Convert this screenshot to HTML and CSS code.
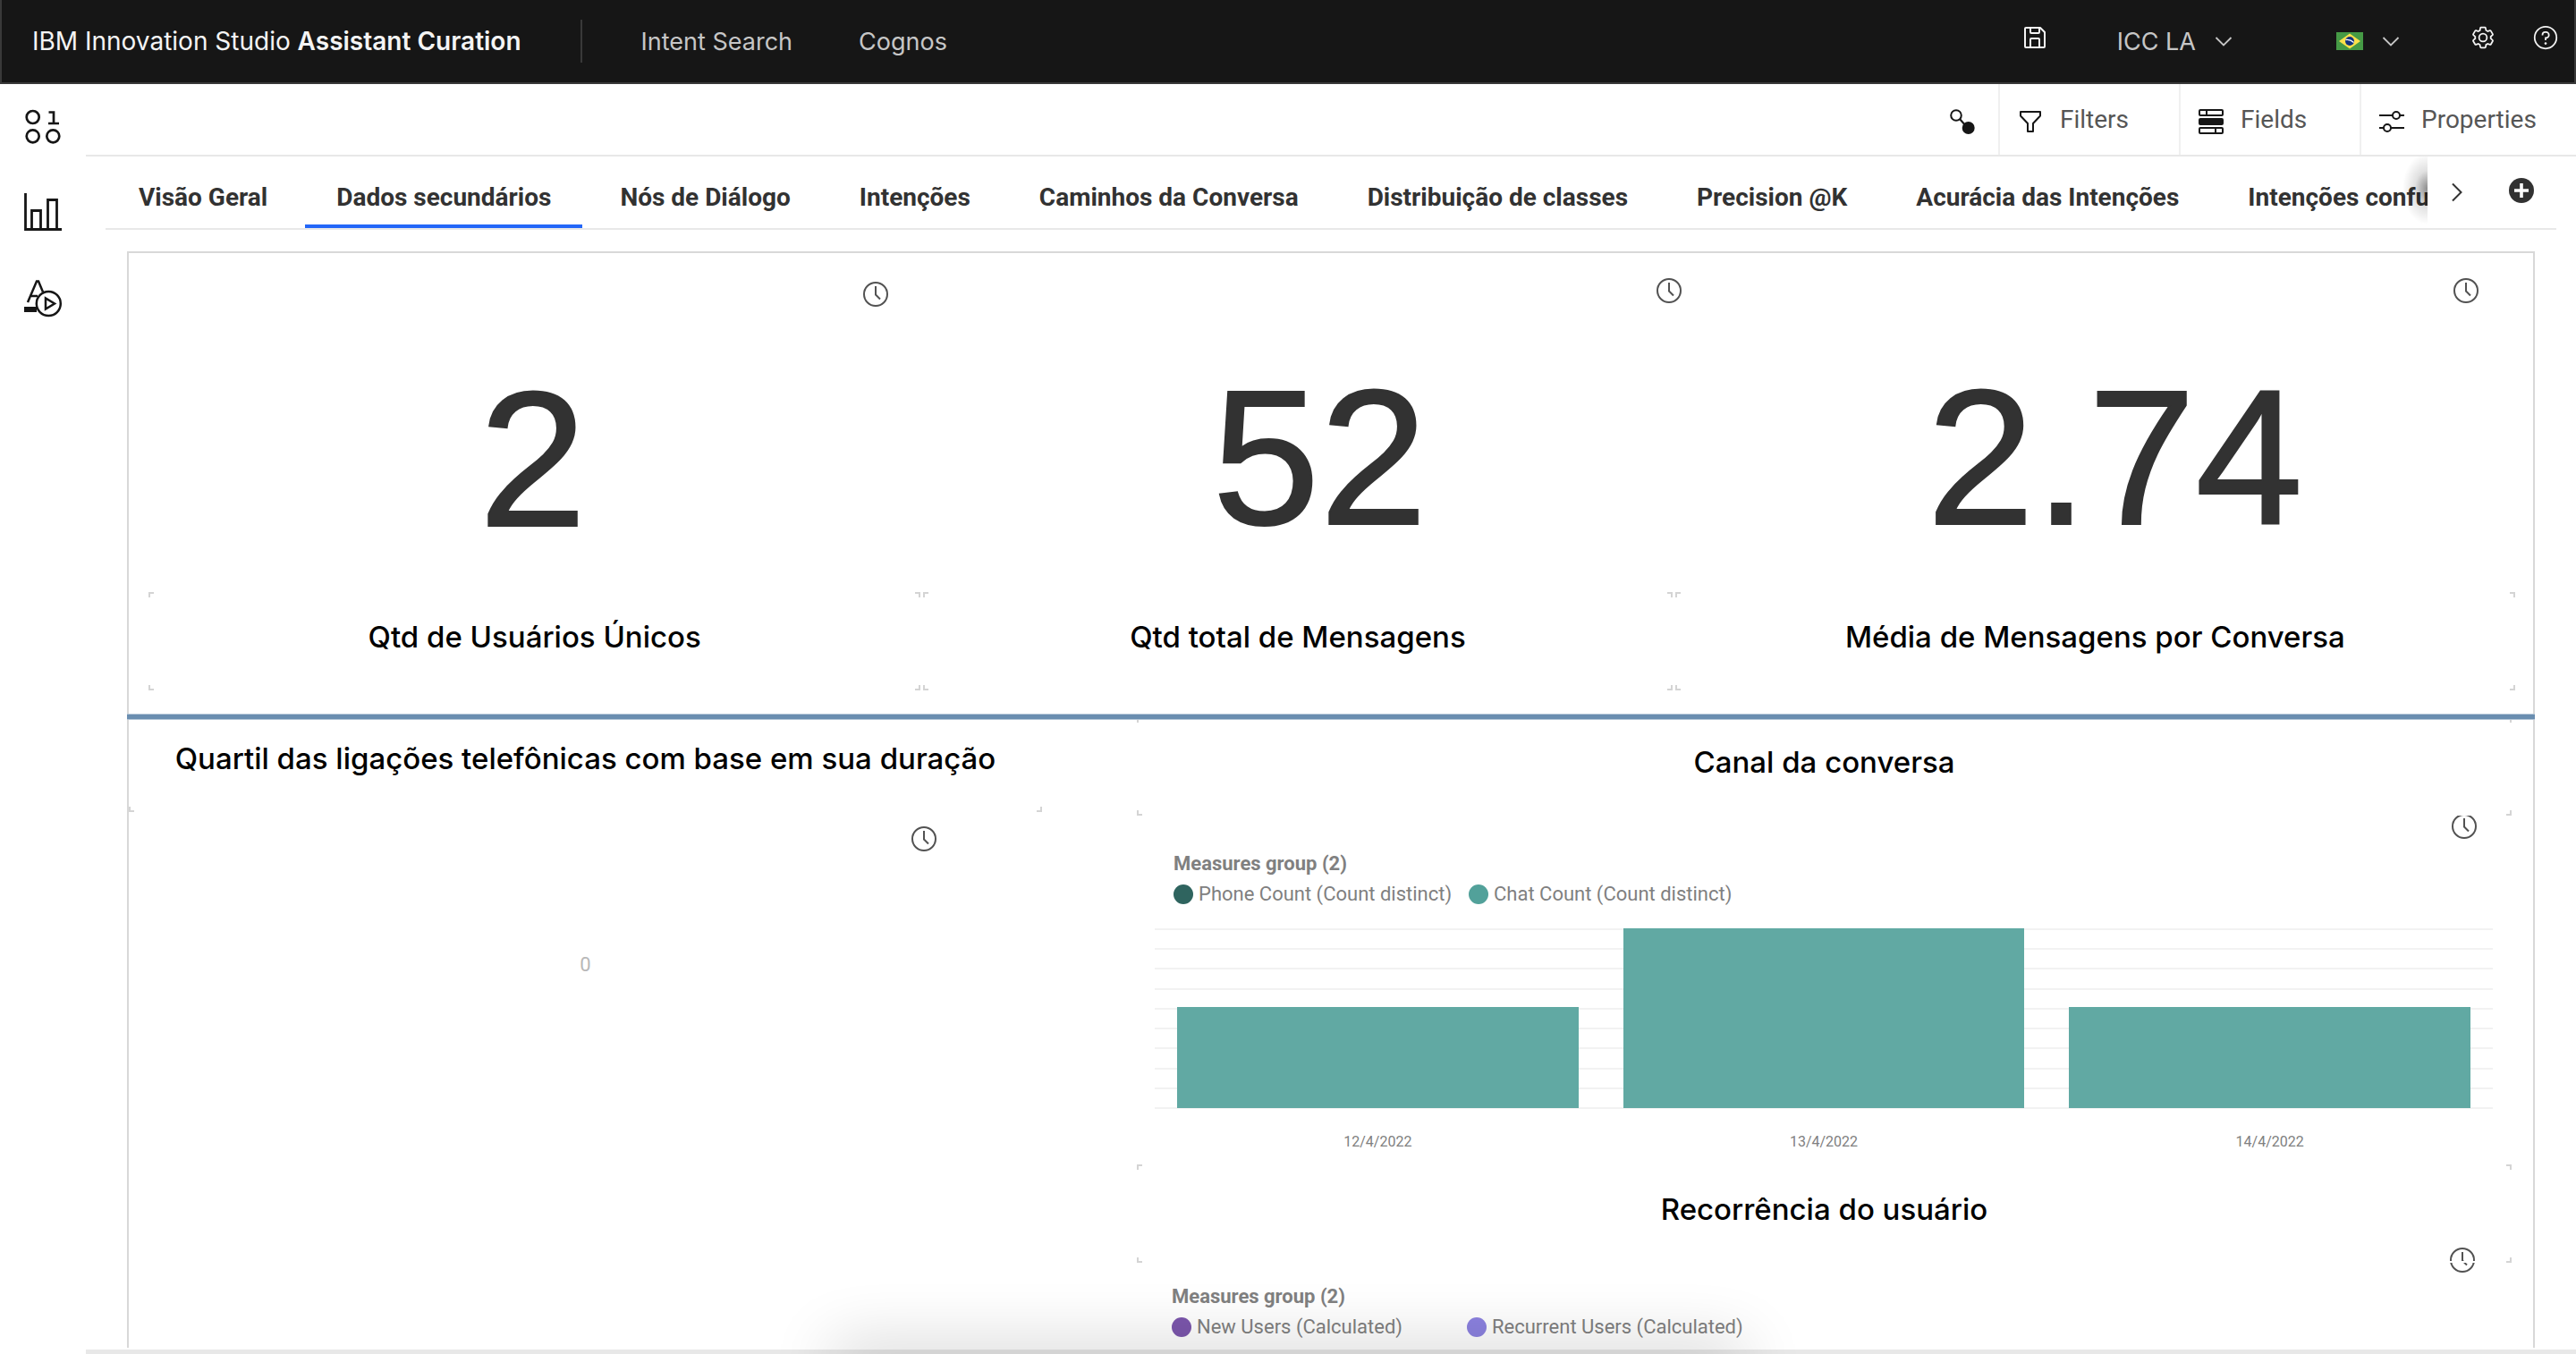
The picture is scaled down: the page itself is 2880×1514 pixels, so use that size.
FILE: index.html
```html
<!DOCTYPE html>
<html lang="pt-BR">
<head>
<meta charset="utf-8">
<meta name="viewport" content="width=device-width, initial-scale=1">
<title>IBM Innovation Studio Assistant Curation</title>
<link rel="stylesheet" href="styles.css">
</head>
<body>
<svg class="sprite" aria-hidden="true">
  <symbol id="clock" viewBox="0 0 28 28"><g fill="none" stroke="currentColor" stroke-width="2"><circle cx="14" cy="14" r="13"/><path d="M14 5v9.500l5 5"/></g></symbol>
  <symbol id="chevron-down" viewBox="0 0 22 22"><path d="M2.500 7 11 15.500 19.500 7" fill="none" stroke="currentColor" stroke-width="1.800"/></symbol>
</svg>
<div class="app">
  <header class="header">
    <a class="brand" href="#">IBM Innovation Studio <b>Assistant Curation</b></a>
    <nav class="header-nav" aria-label="Principal">
      <a href="#">Intent Search</a>
      <a href="#">Cognos</a>
    </nav>
    <div class="header-actions">
      <button class="icon-button" type="button" aria-label="Save">
        <svg width="32" height="32" viewBox="0 0 32 32" fill="currentColor"><path d="M27.710 9.290l-5-5A1 1 0 0 0 22 4H6A2 2 0 0 0 4 6V26a2 2 0 0 0 2 2H26a2 2 0 0 0 2-2V10A1 1 0 0 0 27.710 9.290ZM12 6h8v4H12Zm8 20H12V18h8Zm2 0V18a2 2 0 0 0-2-2H12a2 2 0 0 0-2 2v8H6V6h4v4a2 2 0 0 0 2 2h8a2 2 0 0 0 2-2V6.410l4 4V26Z"/></svg>
      </button>
      <button class="menu-button menu-team" type="button" aria-haspopup="true">ICC LA
        <svg width="22" height="22"><use href="#chevron-down"/></svg>
      </button>
      <button class="menu-button menu-language" type="button" aria-haspopup="true" aria-label="Idioma: Português (Brasil)">
        <svg width="30" height="20" viewBox="0 0 30 20"><path fill="#459a45" d="M0 0h30v20H0z"/><path fill="#fbe04a" d="M15 1.500 27 10 15 18.500 3 10z"/><circle cx="15" cy="10" r="5" fill="#13317f"/><path d="M10.500 8.500q5-.8 9 3" fill="none" stroke="#fff" stroke-width="1.300"/></svg>
        <svg width="22" height="22"><use href="#chevron-down"/></svg>
      </button>
      <button class="icon-button" type="button" aria-label="Settings">
        <svg width="28" height="28" viewBox="0 0 32 32" fill="currentColor"><path d="M27 16.760c0-.25 0-.5 0-.76s0-.51 0-.77l1.920-1.680A2 2 0 0 0 29.300 11L26.940 7a2 2 0 0 0-1.730-1 2 2 0 0 0-.64.1l-2.430.82a11.350 11.350 0 0 0-1.310-.75l-.51-2.520a2 2 0 0 0-2-1.610H13.640a2 2 0 0 0-2 1.610l-.51 2.520a11.480 11.480 0 0 0-1.320.75L7.430 6.060A2 2 0 0 0 6.790 6 2 2 0 0 0 5.060 7L2.700 11a2 2 0 0 0 .41 2.510L5 15.240c0 .25 0 .5 0 .76s0 .51 0 .77L3.110 18.450A2 2 0 0 0 2.700 21L5.060 25a2 2 0 0 0 1.730 1 2 2 0 0 0 .64-.1l2.430-.82a11.350 11.350 0 0 0 1.310.75l.51 2.520a2 2 0 0 0 2 1.610h4.720a2 2 0 0 0 2-1.610l.51-2.520a11.480 11.480 0 0 0 1.320-.75l2.420.82a2 2 0 0 0 .64.1 2 2 0 0 0 1.730-1L29.300 21a2 2 0 0 0-.41-2.510ZM25.210 24l-3.430-1.160a8.860 8.860 0 0 1-2.710 1.570L18.360 28H13.640l-.71-3.550a9.360 9.360 0 0 1-2.700-1.570L6.790 24 4.430 20l2.720-2.400a8.900 8.900 0 0 1 0-3.130L4.430 12 6.790 8l3.430 1.160a8.860 8.860 0 0 1 2.710-1.570L13.640 4h4.720l.71 3.550a9.360 9.360 0 0 1 2.700 1.570L25.210 8 27.570 12l-2.720 2.400a8.900 8.900 0 0 1 0 3.130L27.570 20Z"/><path d="M16 22a6 6 0 1 1 6-6A5.940 5.940 0 0 1 16 22Zm0-10a4 4 0 1 0 4 4A3.910 3.910 0 0 0 16 12Z"/></svg>
      </button>
      <button class="icon-button" type="button" aria-label="Help">
        <svg width="28" height="28" viewBox="0 0 32 32"><circle cx="16" cy="16" r="14" fill="none" stroke="currentColor" stroke-width="2"/><path d="M12 13v-.5A3.500 3.500 0 0 1 15.500 9h1a3.500 3.500 0 0 1 0 7.500H16V19.500" fill="none" stroke="currentColor" stroke-width="2"/><circle cx="16" cy="23.500" r="1.500" fill="currentColor"/></svg>
      </button>
    </div>
  </header>

  <div class="body">
    <nav class="sidebar" aria-label="Seções">
      <a href="#" aria-label="Dados"><svg width="44" height="44" viewBox="0 0 44 44" fill="none" stroke="currentColor" stroke-width="2.700"><circle cx="10.700" cy="11" r="7"/><circle cx="10.700" cy="32.300" r="7"/><circle cx="33.300" cy="32.300" r="7"/><path d="M28.500 5.500h5.500V18M28 18h12"/></svg></a>
      <a href="#" aria-label="Gráficos"><svg width="44" height="44" viewBox="0 0 44 44" fill="none" stroke="currentColor" stroke-width="2.800"><path d="M2.500 0v40.500H43M9.500 40V19.500h10V40M27.500 40V7.500h10V40"/></svg></a>
      <a href="#" aria-label="Treinamento"><svg width="44" height="44" viewBox="0 0 44 44" fill="none" stroke="currentColor" stroke-width="2.500"><path d="M5 26 15 2.500h2L22 14.500M9 19h7"/><path d="M1 34h14" stroke-width="6"/><circle cx="28.300" cy="27.500" r="13.500"/><path d="M25 21.500v12l10-6z"/></svg></a>
    </nav>

    <main class="main">
      <div class="toolbar">
        <button class="link-button" type="button" aria-label="Link"><svg width="28" height="28" viewBox="0 0 28 28"><circle cx="7" cy="7" r="5.800" fill="none" stroke="currentColor" stroke-width="2"/><path d="M11 11l7 8" stroke="currentColor" stroke-width="2"/><circle cx="20.700" cy="21" r="7" fill="currentColor"/></svg></button>
        <button class="tool" type="button"><svg width="28" height="28" viewBox="0 0 28 28" fill="none" stroke="currentColor" stroke-width="2"><path d="M3 3h22v4.500l-8 8.500v9h-6v-9L3 7.500z" stroke-linejoin="round"/></svg>Filters</button>
        <button class="tool" type="button"><svg width="28" height="28" viewBox="0 0 28 28" fill="none" stroke="currentColor" stroke-width="2"><rect x="1" y="1" width="26" height="6" rx="1"/><path d="M9 1v6M19 21v6"/><rect x="1" y="11" width="26" height="6" rx="1" fill="currentColor"/><rect x="1" y="21" width="26" height="6" rx="1"/></svg>Fields</button>
        <button class="tool tool-wide" type="button"><svg width="28" height="28" viewBox="0 0 28 28" fill="none" stroke="currentColor" stroke-width="2"><path d="M0 7h15M23 7h5M0 21h5M13 21h15"/><circle cx="19" cy="7" r="4"/><circle cx="9" cy="21" r="4"/></svg>Properties</button>
      </div>

      <div class="tabbar">
        <div class="tabs" role="tablist">
          <button class="tab" type="button" role="tab" aria-selected="false">Visão Geral</button>
          <button class="tab" type="button" role="tab" aria-selected="true">Dados secundários</button>
          <button class="tab" type="button" role="tab" aria-selected="false">Nós de Diálogo</button>
          <button class="tab" type="button" role="tab" aria-selected="false">Intenções</button>
          <button class="tab" type="button" role="tab" aria-selected="false">Caminhos da Conversa</button>
          <button class="tab" type="button" role="tab" aria-selected="false">Distribuição de classes</button>
          <button class="tab" type="button" role="tab" aria-selected="false">Precision @K</button>
          <button class="tab" type="button" role="tab" aria-selected="false">Acurácia das Intenções</button>
          <button class="tab" type="button" role="tab" aria-selected="false">Intenções confusas</button>
        </div>
        <button class="tab-next" type="button" aria-label="Próximas abas"><svg width="24" height="24" viewBox="0 0 24 24"><path d="M7 2.500 16.500 12 7 21.500" fill="none" stroke="currentColor" stroke-width="2"/></svg></button>
        <button class="tab-add" type="button" aria-label="Adicionar aba"><svg width="28" height="28" viewBox="0 0 28 28"><circle cx="14" cy="14" r="14" fill="currentColor"/><path d="M14 6v16M6 14h16" stroke="#fff" stroke-width="3.600"/></svg></button>
      </div>

      <div class="viewport">
        <div class="dashboard">
          <section class="kpis">
            <div class="kpi"><svg class="clock"><use href="#clock"/></svg><p class="kpi-value">2</p></div>
            <div class="kpi"><svg class="clock"><use href="#clock"/></svg><p class="kpi-value">52</p></div>
            <div class="kpi"><svg class="clock"><use href="#clock"/></svg><p class="kpi-value">2.74</p></div>
          </section>
          <section class="kpi-labels">
            <h2 class="caption">Qtd de Usuários Únicos</h2>
            <h2 class="caption">Qtd total de Mensagens</h2>
            <h2 class="caption">Média de Mensagens por Conversa</h2>
          </section>

          <hr class="divider">

          <div class="charts">
            <section class="column">
              <h2 class="caption">Quartil das ligações telefônicas com base em sua duração</h2>
              <div class="quartile">
                <svg class="clock"><use href="#clock"/></svg>
                <p class="empty-value">0</p>
              </div>
            </section>
            <section class="column column-right">
              <h2 class="caption">Canal da conversa</h2>
              <div class="widget">
                <svg class="clock"><use href="#clock"/></svg>
                <h3 class="legend-title">Measures group (2)</h3>
                <ul class="legend">
                  <li class="phone">Phone Count (Count distinct)</li>
                  <li class="chat">Chat Count (Count distinct)</li>
                </ul>
                <div class="plot">
                  <div class="gridlines"><i></i><i></i><i></i><i></i><i></i><i></i><i></i><i></i><i></i><i></i></div>
                  <div class="bars">
                    <div class="bar" style="height:56%"></div>
                    <div class="bar" style="height:100%"></div>
                    <div class="bar" style="height:56%"></div>
                  </div>
                </div>
                <div class="axis"><span>12/4/2022</span><span>13/4/2022</span><span>14/4/2022</span></div>
              </div>
              <h2 class="caption">Recorrência do usuário</h2>
              <div class="widget widget-overlap">
                <svg class="clock"><use href="#clock"/></svg>
                <h3 class="legend-title">Measures group (2)</h3>
                <ul class="legend">
                  <li class="new">New Users (Calculated)</li>
                  <li class="recurrent">Recurrent Users (Calculated)</li>
                </ul>
              </div>
            </section>
          </div>
        </div>
      </div>
      <div class="scroll-track"></div>
    </main>
  </div>
  <div class="dock-shadow"></div>
</div>
</body>
</html>
```
FILE: styles.css
```css
:root {
  --ink: #161616;
  --text: #323232;
  --muted: #565656;
  --label: #808080;
  --line: #e8e8e8;
  --frame: #d8d8d8;
  --plex: Roboto, "Noto Sans", sans-serif;
  --inter: Inter, "Open Sans", sans-serif;
}

* { box-sizing: border-box; }

body, h2, h3, p, ul, hr { margin: 0; padding: 0; }

body {
  background: #fff;
  color: var(--text);
  font-family: var(--plex);
}

button {
  border: 0;
  padding: 0;
  background: none;
  color: inherit;
  font: inherit;
  cursor: pointer;
}

a { color: inherit; text-decoration: none; }

svg { display: block; flex: none; }

.sprite { position: absolute; width: 0; height: 0; }

.app {
  position: relative;
  display: flex;
  flex-direction: column;
  height: 100vh;
  overflow: hidden;
}

/* Header */
.header {
  display: flex;
  flex: none;
  align-items: center;
  height: 94px;
  padding: 0 18px 0 34px;
  border: solid #393939;
  border-width: 0 2px 2px;
  background: var(--ink);
  color: #f4f4f4;
  font-family: var(--inter);
  font-size: 27px;
  white-space: nowrap;
}

.brand { font-size: 28px; }
.brand b { font-weight: 600; }

.header-nav {
  display: flex;
  align-items: center;
  gap: 74px;
  height: 48px;
  margin-left: 66px;
  padding-left: 66px;
  border-left: 2px solid #393939;
  color: #c6c6c6;
}

.header-actions {
  display: flex;
  align-items: center;
  margin-left: auto;
}

.icon-button { margin-left: 42px; padding-bottom: 8px; }
.menu-button { display: flex; align-items: center; gap: 20px; color: #c6c6c6; }
.menu-team { margin-left: 76px; }
.menu-language { margin: 0 36px 0 115px; }

/* Shell */
.body { display: flex; flex: 1; min-height: 0; }

.sidebar {
  display: flex;
  flex: none;
  flex-direction: column;
  gap: 52px;
  width: 96px;
  padding: 26px 0 0 26px;
  color: var(--ink);
}

.sidebar a { width: 44px; }

.main { display: flex; flex: 1; flex-direction: column; min-width: 0; }

/* Toolbar */
.toolbar {
  display: flex;
  flex: none;
  justify-content: flex-end;
  height: 81px;
  border-bottom: 2px solid var(--line);
  color: var(--muted);
  font-size: 28px;
}

.toolbar svg { margin-top: 4px; color: var(--ink); }

.link-button { padding-right: 26px; }

.tool {
  display: flex;
  align-items: center;
  gap: 19px;
  width: 202px;
  padding-left: 20px;
  border-left: 2px solid #f0f0f0;
}

.tool-wide { width: 242px; }

/* Tabs */
.tabbar {
  display: flex;
  flex: none;
  height: 82px;
  margin: 0 22px;
  border-bottom: 2px solid var(--line);
}

.tabs {
  display: flex;
  flex: 1;
  gap: 7px;
  min-width: 0;
  padding-left: 2px;
  overflow: hidden;
}

.tab {
  flex: none;
  padding: 14px 35px 0;
  border-bottom: 4px solid transparent;
  font-size: 28px;
  font-weight: 700;
  white-space: nowrap;
}

.tab[aria-selected="true"] { border-color: #2467f8; }

.tab-next, .tab-add { display: flex; align-items: center; justify-content: center; }

.tab-next { position: relative; width: 65px; }

.tab-next::before {
  content: "";
  position: absolute;
  top: 0;
  right: 100%;
  width: 32px;
  height: 100%;
  background: radial-gradient(ellipse 28px 40px at 100% 45%, rgba(0, 0, 0, .45), rgba(0, 0, 0, .12) 50%, transparent);
}

.tab-add { width: 79px; padding-bottom: 4px; }

/* Dashboard */
.viewport {
  flex: 1;
  min-height: 0;
  margin: 24px 46px 2px;
  overflow: hidden;
}

.dashboard {
  min-height: 100%;
  border: 2px solid var(--frame);
  border-bottom: 0;
}

.clock { width: 28px; height: 28px; color: #525252; }

.kpis {
  display: grid;
  grid-template-columns: 873fr 887fr 891fr;
  padding-right: 37px;
}

.kpi {
  display: flex;
  flex-direction: column;
  align-items: flex-end;
  padding: 28px 24px 41px 0;
}

.kpi:first-child { padding-top: 32px; }

.kpi-value {
  align-self: stretch;
  margin-top: 64px;
  padding-left: 54px;
  font-family: "Liberation Sans", Arial, sans-serif;
  font-size: 216px;
  line-height: 216px;
  text-align: center;
  -webkit-text-stroke: 2px currentColor;
}

.kpi:first-child .kpi-value { margin-top: 62px; }

.kpi-labels {
  display: grid;
  grid-template-columns: 863fr 837fr 939fr;
  column-gap: 3px;
  padding: 0 20px 0 22px;
}

/* Title tile with light marks in its four corners */
.caption {
  --mark: linear-gradient(#d4d4d4, #d4d4d4);
  position: relative;
  height: 110px;
  padding-top: 30px;
  background:
    var(--mark) left top / 6px 2px,
    var(--mark) left top / 2px 6px,
    var(--mark) right top / 6px 2px,
    var(--mark) right top / 2px 6px,
    var(--mark) left bottom / 6px 2px,
    var(--mark) left bottom / 2px 6px,
    var(--mark) right bottom / 6px 2px,
    var(--mark) right bottom / 2px 6px,
    linear-gradient(#fff, #fff) center bottom / calc(100% - 12px) 2px;
  background-repeat: no-repeat;
  color: #000;
  font-family: var(--inter);
  font-size: 33px;
  font-weight: 500;
  line-height: 40px;
  text-align: center;
  white-space: nowrap;
  z-index: 1;
}

.divider {
  position: relative;
  height: 7px;
  margin: 26px -2px 0;
  border: solid #b4c6d7;
  border-width: 1px 0;
  background: #6a8eb0;
  z-index: 2;
}

.charts {
  display: grid;
  grid-template-columns: 1021fr 1561fr;
  column-gap: 106px;
  margin-top: -7px;
}

.column-right { padding-top: 4px; }
.column-right .caption { margin-right: 24px; }

.quartile {
  display: flex;
  flex-direction: column;
  align-items: center;
  padding-top: 16px;
}

.quartile .clock { align-self: flex-end; margin-right: 118px; }

.empty-value {
  margin-top: 113px;
  color: #b8b8b8;
  font-size: 22px;
  line-height: 28px;
}

.widget { padding: 0 63px 15px 41px; color: var(--label); }
.widget .clock { margin: -2px 0 14px auto; }
.widget-overlap { padding-right: 65px; padding-left: 39px; }
.widget-overlap .clock { margin-top: -17px; margin-bottom: 13px; }

.legend-title { font-size: 22px; font-weight: 700; line-height: 28px; }

.legend {
  display: grid;
  grid-template-columns: 324px auto;
  justify-content: start;
  column-gap: 6px;
  margin-top: 6px;
  font-size: 22px;
  line-height: 28px;
  list-style: none;
  white-space: nowrap;
}

.legend li { display: flex; align-items: center; gap: 6px; }

.legend li::before {
  content: "";
  width: 22px;
  height: 22px;
  border-radius: 50%;
  background: var(--series);
}

.phone { --series: #2f645f; }
.chat { --series: #52a19a; }
.new { --series: #7c57ad; }
.recurrent { --series: #8c82e0; }

.plot { display: grid; height: 202px; margin: 24px -18px 0 -21px; }

.gridlines, .bars { grid-area: 1 / 1; }

.gridlines { display: flex; flex-direction: column; justify-content: space-between; }
.gridlines i { height: 2px; background: #f2f2f2; }

.bars, .axis { display: grid; grid-template-columns: repeat(3, 1fr); }

.bars { align-items: end; padding-bottom: 1px; }
.bar { margin: 0 5%; background: #61a9a3; }

.axis {
  margin: 27px -18px 0 -21px;
  font-size: 16px;
  line-height: 20px;
  text-align: center;
}

.scroll-track { flex: none; height: 5px; background: var(--line); }

.dock-shadow {
  position: absolute;
  bottom: -20px;
  left: 50%;
  width: 1000px;
  height: 20px;
  margin-left: -500px;
  box-shadow: 0 0 70px 10px rgba(0, 0, 0, .2);
}
```
